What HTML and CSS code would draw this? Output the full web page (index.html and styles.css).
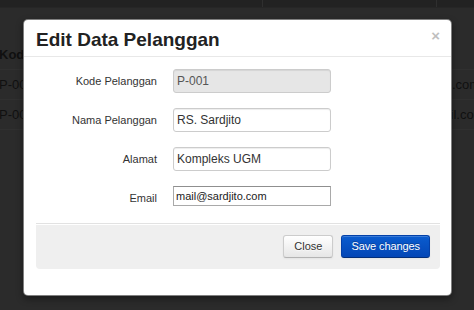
FILE: index.html
```html
<!DOCTYPE html>
<html>
<head>
<meta charset="utf-8">
<link rel="stylesheet" href="styles.css">
</head>
<body>
<div class="page">
  <div class="navbar"><span class="nav-item nav-a"></span><span class="nav-item nav-b"></span></div>
  <div class="table">
    <div class="tr th"><span class="c1">Kode</span><span class="c2">Email</span></div>
    <div class="tr"><span class="c1">P-001</span><span class="c2">mail@sardjito.com</span></div>
    <div class="tr"><span class="c1">P-002</span><span class="c2">rspanti@gmail.com</span></div>
  </div>
</div>
<div class="modal">
  <div class="modal-header">
    <button class="close" type="button">×</button>
    <h3 class="title">Edit Data Pelanggan</h3>
  </div>
  <div class="modal-body">
    <div class="form">
      <div class="row"><label class="label">Kode Pelanggan</label><input class="input" type="text" value="P-001" disabled></div>
      <div class="row"><label class="label">Nama Pelanggan</label><input class="input" type="text" value="RS. Sardjito"></div>
      <div class="row"><label class="label">Alamat</label><input class="input" type="text" value="Kompleks UGM"></div>
      <div class="row"><label class="label">Email</label><input class="plain" type="text" value="mail@sardjito.com"></div>
    </div>
  </div>
  <div class="modal-footer">
    <button class="btn" type="button">Close</button>
    <button class="btn btn-primary" type="button">Save changes</button>
  </div>
</div>
</body>
</html>
```
FILE: styles.css
```css
html, body {
  margin: 0;
  padding: 0;
}
body {
  width: 474px;
  height: 310px;
  overflow: hidden;
  background: #2b2b2b;
  font-family: "Liberation Sans", Arial, sans-serif;
}
.page {
  width: 474px;
  height: 310px;
  overflow: hidden;
}
.navbar {
  height: 7px;
  background: #222222;
  border-bottom: 1px solid #262626;
  display: flex;
}
.nav-item {
  height: 7px;
}
.nav-a {
  width: 262px;
  border-right: 1px solid #2f2f2f;
}
.nav-b {
  width: 173px;
  border-right: 1px solid #2f2f2f;
}
.table {
  margin-top: 32px;
  width: 520px;
  font-size: 13px;
  color: #101010;
}
.tr {
  display: grid;
  grid-template-columns: 373px 1fr;
  height: 30px;
  align-items: center;
  border-bottom: 1px solid #303030;
  box-sizing: border-box;
  white-space: nowrap;
}
.th {
  font-weight: bold;
}
.c1 {
  margin-left: -1px;
}

.modal {
  position: absolute;
  left: 23px;
  top: 19px;
  width: 427px;
  height: 275px;
  background: #ffffff;
  border: 1px solid rgba(0, 0, 0, 0.5);
  border-radius: 5px;
  box-shadow: 0 3px 7px rgba(0, 0, 0, 0.4);
}
.modal-header {
  padding: 8px 11px 4px 12px;
  border-bottom: 1px solid #e8e8e8;
}
.title {
  margin: 0;
  font-size: 19px;
  line-height: 24px;
  font-weight: bold;
  color: #222222;
}
.close {
  float: right;
  margin: 0;
  padding: 0;
  border: 0;
  background: transparent;
  font-family: "Liberation Sans", Arial, sans-serif;
  font-size: 15px;
  line-height: 16px;
  font-weight: bold;
  color: #000000;
  opacity: 0.25;
}
.modal-body {
  padding: 12px 12px 0 12px;
}
.form {
  display: flex;
  flex-direction: column;
  gap: 15px;
}
.row {
  display: grid;
  grid-template-columns: 121px 158px;
  column-gap: 16px;
  height: 24px;
  align-items: center;
}
.label {
  text-align: right;
  font-size: 11px;
  color: #333333;
}
.input {
  box-sizing: border-box;
  height: 24px;
  width: 158px;
  margin: 0;
  padding: 0 3px;
  border: 1px solid #cccccc;
  border-radius: 3px;
  background: #ffffff;
  font-family: "Liberation Sans", Arial, sans-serif;
  font-size: 12px;
  color: #333333;
  box-shadow: inset 0 1px 1px rgba(0, 0, 0, 0.075);
}
.input:disabled {
  background: #e6e6e6;
  color: #555555;
}
.plain {
  align-self: start;
  box-sizing: border-box;
  height: 20px;
  width: 158px;
  margin: 0;
  padding: 0 2px;
  border: 1px solid #a9a9a9;
  border-top-color: #8f8f8f;
  border-radius: 0;
  background: #ffffff;
  font-family: "Liberation Sans", Arial, sans-serif;
  font-size: 11px;
  color: #222222;
}
.modal-footer {
  margin: 13px 11px 0 12px;
  padding: 11px 10px 11px 10px;
  background: #efefef;
  border-top: 1px solid #e2e2e2;
  border-radius: 0 0 4px 4px;
  box-shadow: inset 0 1px 0 #ffffff;
  display: flex;
  justify-content: flex-end;
  gap: 8px;
}
.btn {
  box-sizing: border-box;
  height: 23px;
  margin: 0;
  padding: 0 10px;
  font-family: "Liberation Sans", Arial, sans-serif;
  font-size: 11px;
  line-height: 21px;
  color: #333333;
  background: linear-gradient(to bottom, #ffffff, #e6e6e6);
  border: 1px solid #cccccc;
  border-bottom-color: #b3b3b3;
  border-radius: 3px;
  box-shadow: inset 0 1px 0 rgba(255, 255, 255, 0.2), 0 1px 2px rgba(0, 0, 0, 0.05);
  text-shadow: 0 1px 1px rgba(255, 255, 255, 0.75);
}
.btn-primary {
  padding: 0 9px;
  letter-spacing: -0.1px;
  color: #ffffff;
  background: linear-gradient(to bottom, #0a5ccf, #0346b6);
  border-color: #0340a8 #0340a8 #022e7a;
  text-shadow: 0 -1px 0 rgba(0, 0, 0, 0.25);
}
```
